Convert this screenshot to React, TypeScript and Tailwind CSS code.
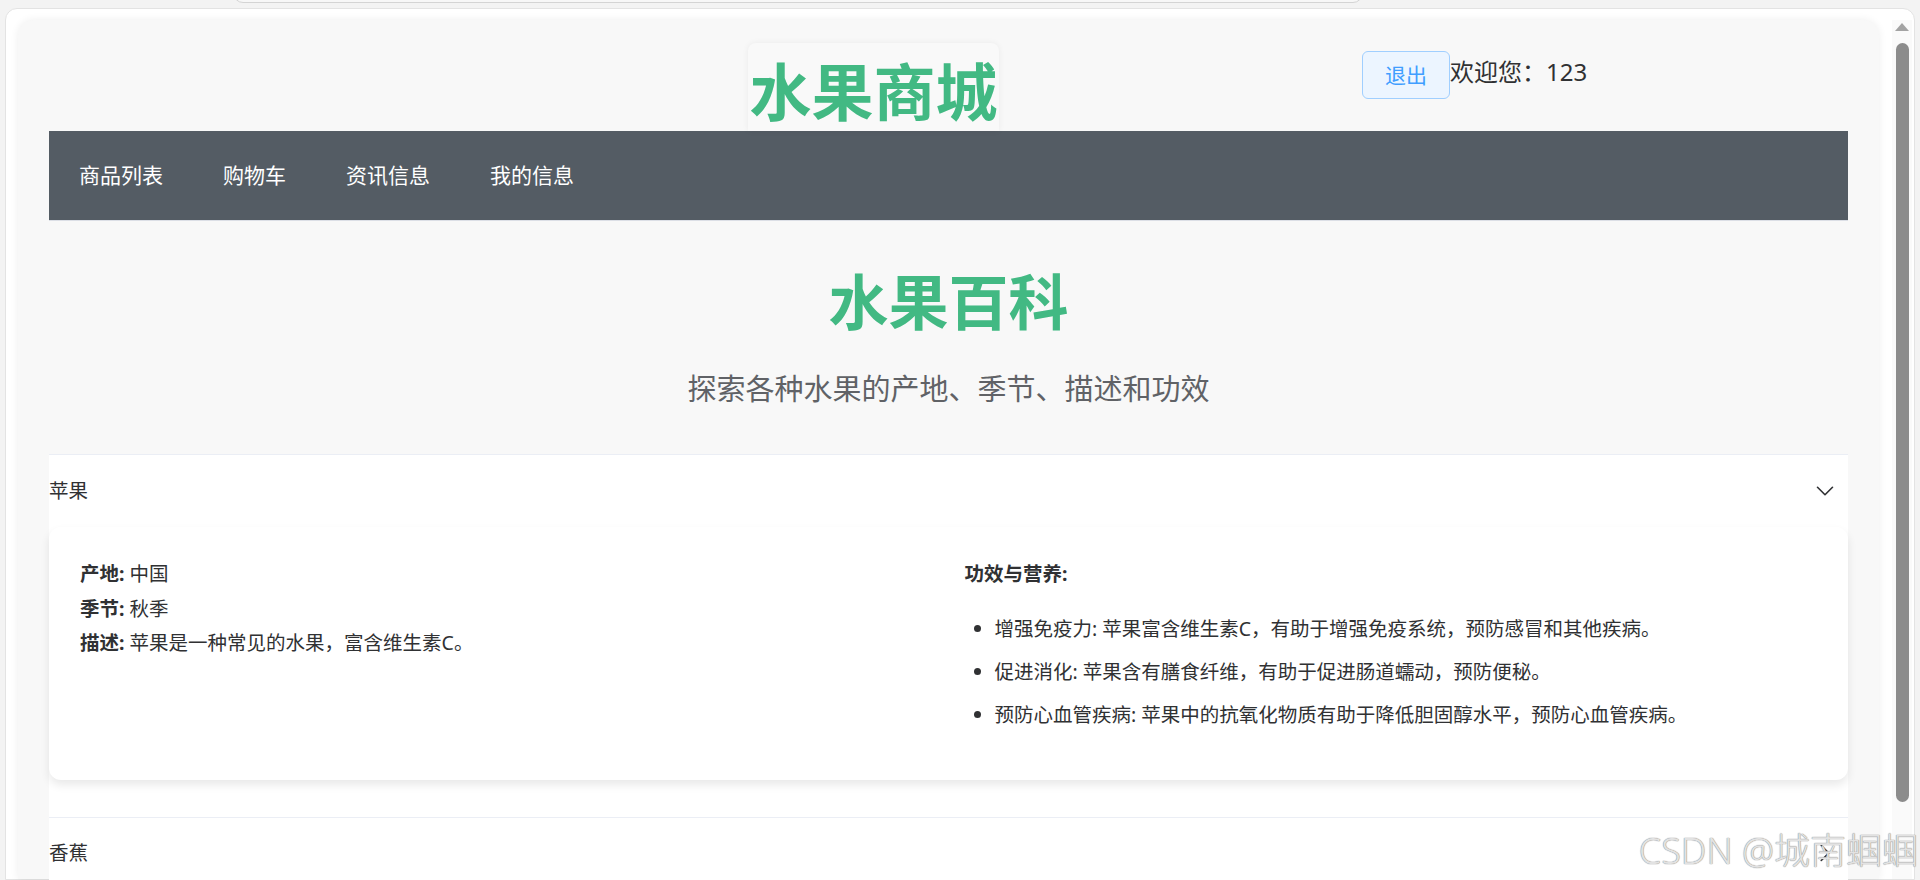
import { ChevronDown, ChevronRight } from "lucide-react";

const benefits = [
  "增强免疫力: 苹果富含维生素C，有助于增强免疫系统，预防感冒和其他疾病。",
  "促进消化: 苹果含有膳食纤维，有助于促进肠道蠕动，预防便秘。",
  "预防心血管疾病: 苹果中的抗氧化物质有助于降低胆固醇水平，预防心血管疾病。",
];

const menu = ["商品列表", "购物车", "资讯信息", "我的信息"];

export default function App() {
  return (
    <div className="relative h-[880px] overflow-hidden bg-[#f3f3f3] font-['Noto_Sans','Noto_Sans_CJK_SC',sans-serif] text-[#303133]">
      {/* bottom edge of the browser address bar */}
      <div className="absolute left-[233px] top-[-20px] h-[23px] w-[1130px] rounded-b-[10px] border border-[#d4d4d4] bg-[#f7f7f7]" />

      <div className="px-[5px] pt-[8px]">
        <div className="flex h-[872px] rounded-t-[12px] border border-[#e3e3e3] bg-white pl-[12px] pt-[11px]">
          {/* page */}
          <div className="w-[1861px] rounded-t-[16px] bg-[#f8f8f8] px-[31px] shadow-[0_0_8px_rgba(0,0,0,0.07)]">
            {/* header */}
            <div className="flex h-[111px] items-start">
              <div className="ml-[699px] mt-[23px] h-[88px] w-[251px] rounded-t-[8px] bg-[#f9f9f9] pt-[10px] text-center text-[62px] font-bold leading-[78px] text-[#42b983] shadow-[0_0_6px_rgba(0,0,0,0.06)]">
                水果商城
              </div>
              <div className="ml-[363px] mt-[31px] flex items-start">
                <button className="h-[48px] rounded-[6px] border border-[#a0cfff] bg-[#ecf5ff] px-[22px] text-[21px] leading-[46px] text-[#409eff]">
                  退出
                </button>
                <span className="text-[24px] leading-[42px] text-[#303133]">欢迎您：123</span>
              </div>
            </div>

            {/* menu */}
            <nav className="flex h-[90px] border-b border-[#dcdfe6] bg-[#545c64]">
              {menu.map((m) => (
                <div key={m} className="px-[30px] text-[21px] leading-[89px] text-white">
                  {m}
                </div>
              ))}
            </nav>

            {/* hero */}
            <div className="pt-[45px] text-center">
              <h1 className="text-[60px] font-bold leading-[72px] text-[#42b983]">水果百科</h1>
              <p className="mt-[31px] text-[29px] leading-[40px] text-[#606266]">
                探索各种水果的产地、季节、描述和功效
              </p>
            </div>

            {/* collapse */}
            <div className="mt-[45px] border-t border-[#ebeef5]">
              <div className="bg-white">
                <div className="flex h-[72px] items-center justify-between text-[19.5px]">
                  <span>苹果</span>
                  <ChevronDown size={30} strokeWidth={1.3} className="mr-[8px] text-[#303133]" />
                </div>
                <div className="border-b border-[#ebeef5] pb-[37px]">
                  <div className="rounded-[12px] bg-white px-[31px] pt-[30px] pb-[31px] text-[19.5px] leading-[34.5px] shadow-[0_5px_10px_rgba(0,0,0,0.09)]">
                    <div className="grid grid-cols-2 gap-[30px]">
                      <div>
                        <p>
                          <strong>产地:</strong> 中国
                        </p>
                        <p>
                          <strong>季节:</strong> 秋季
                        </p>
                        <p>
                          <strong>描述:</strong> 苹果是一种常见的水果，富含维生素C。
                        </p>
                      </div>
                      <div className="pl-[1px]">
                        <p>
                          <strong>功效与营养:</strong>
                        </p>
                        <ul className="mt-[20.5px] mb-[16px] flex list-disc flex-col gap-[8.5px] pl-[30px]">
                          {benefits.map((b) => (
                            <li key={b}>{b}</li>
                          ))}
                        </ul>
                      </div>
                    </div>
                  </div>
                </div>
              </div>
              <div className="flex h-[72px] items-center justify-between border-b border-[#ebeef5] bg-white text-[19.5px]">
                <span>香蕉</span>
                <ChevronRight size={30} strokeWidth={1.3} className="mr-[8px] text-[#303133]" />
              </div>
            </div>
          </div>

          {/* scrollbar */}
          <div className="ml-[13px] w-[20px] bg-[#fafafa]">
            <div className="mx-auto mt-[3px] h-0 w-0 border-x-[7.5px] border-b-[8px] border-x-transparent border-b-[#a3a3a3]" />
            <div className="mx-auto mt-[12px] h-[759px] w-[13px] rounded-full bg-[#8c8c8c]" />
          </div>
        </div>
      </div>

      {/* watermark */}
      <div className="absolute right-[2px] top-[828px] text-[36px] font-light leading-[46px] text-[#e2e2e2] [text-shadow:0_0_1px_#8f8f8f,0_0_1px_#8f8f8f]">
        CSDN @城南蝈蝈
      </div>
    </div>
  );
}
